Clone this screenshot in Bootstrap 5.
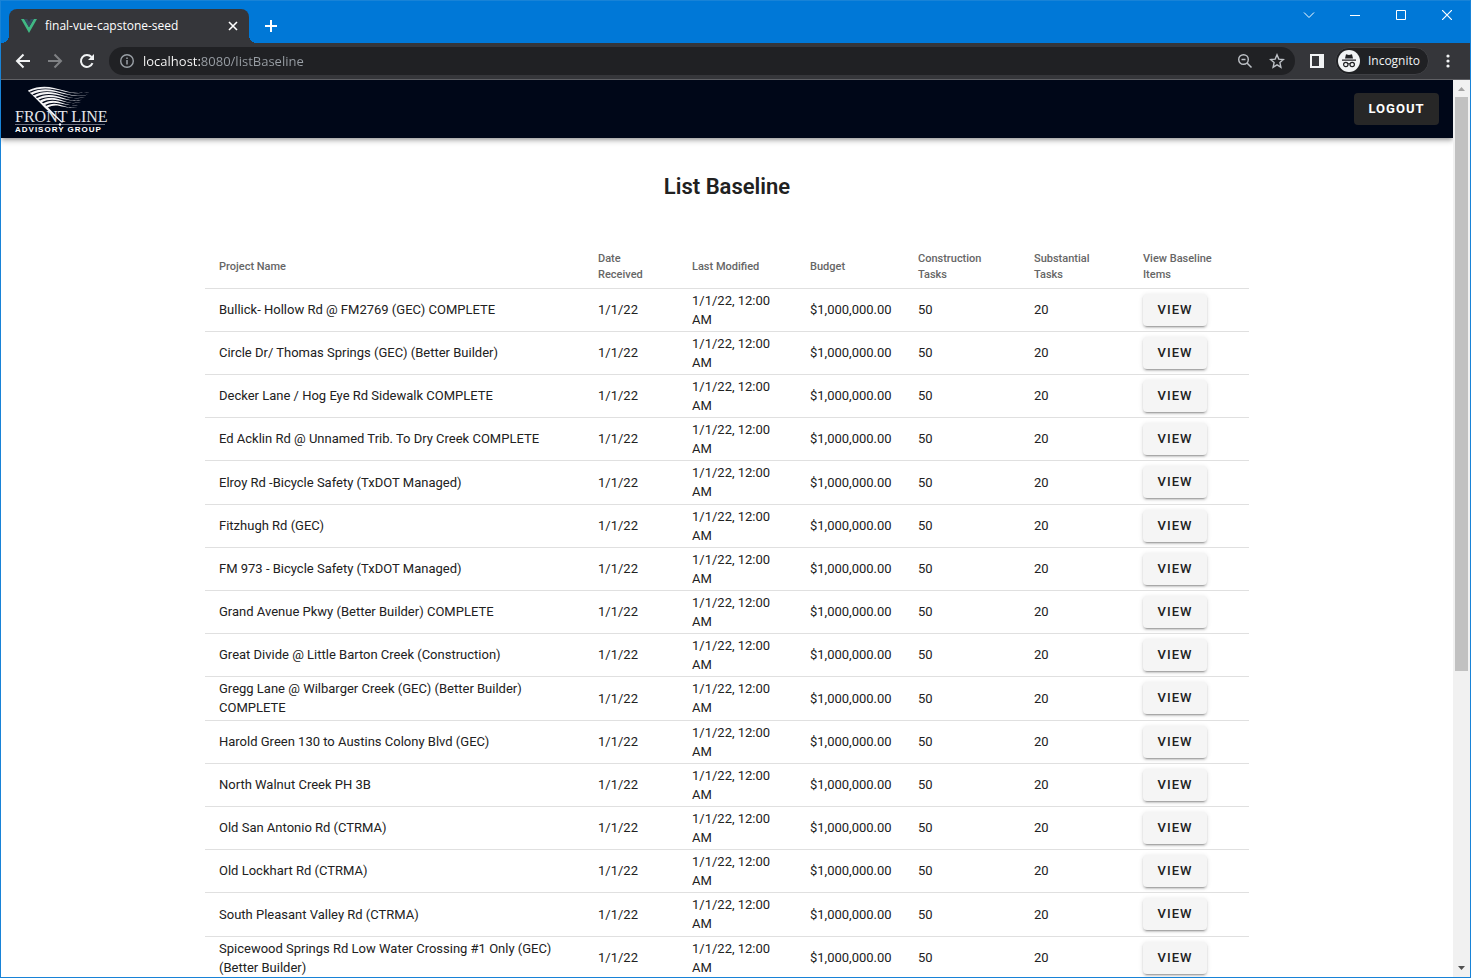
<!DOCTYPE html>
<html lang="en">
<head>
<meta charset="utf-8">
<title>final-vue-capstone-seed</title>
<meta name="viewport" content="width=device-width, initial-scale=1">
<link href="https://cdn.jsdelivr.net/npm/bootstrap@5.3.0/dist/css/bootstrap.min.css" rel="stylesheet">
<style>
  body { font-family: Roboto, sans-serif; color: #212121; height: 100vh; background: #fff; border: 1px solid #1883d7; }
  .chrome { font-family: "Open Sans", "Noto Sans", sans-serif; font-size: 12px; }
  .bare { background: none; border: 0; padding: 0; color: inherit; display: flex; align-items: center; justify-content: center; flex: none; }
  .titlebar { background: #0078d7; height: 42px; padding-left: 8px; color: #fff; }
  .tab { background: #35363a; width: 240px; height: 34px; border-radius: 8px 8px 0 0; padding: 0 8px 0 12px; position: relative; }
  .tab::before, .tab::after { content: ""; position: absolute; bottom: 0; width: 8px; height: 8px; }
  .tab::before { left: -8px; background: radial-gradient(circle at 0 0, #0078d7 8px, #35363a 8px); }
  .tab::after { right: -8px; background: radial-gradient(circle at 100% 0, #0078d7 8px, #35363a 8px); }
  .newtab { width: 28px; height: 34px; margin-left: 8px; }
  .winbtn { width: 46px; height: 28px; }
  .toolbar { background: #35363a; height: 37px; border-bottom: 1px solid #5f6064; color: #f1f3f4; padding: 0 6px; }
  .toolbtn { width: 32px; height: 32px; }
  .omnibox { background: #202124; height: 28px; border-radius: 14px; padding: 0 2px 0 10px; color: #9aa0a6; margin-left: 6px; }
  .address { border: 0; padding: 0; outline: 0; height: 28px; font-size: 13px; color: transparent; background: linear-gradient(90deg, #fff 58px, #9aa0a6 58px); -webkit-background-clip: text; background-clip: text; min-width: 0; }
  .incognito { height: 28px; background: #202124; border: 1px solid #3f4044; border-radius: 14px; padding: 0 8px 0 2px; gap: 8px; margin: 0 3px 0 4px; }
  .appbar { background: #000718; height: 58px; padding: 0 14px 0 13px; box-shadow: 0 2px 4px -1px rgba(0,0,0,.35), 0 4px 5px rgba(0,0,0,.14); position: relative; }
  .logout { background: #272727; color: #fff; font-size: 13px; font-weight: 700; letter-spacing: 1px; height: 32px; width: 85px; border: 0; border-radius: 4px; padding: 0; line-height: 32px; }
  .logout:hover { background: #333; color: #fff; }
  .page-title { font-size: 22px; font-weight: 600; line-height: 32px; margin: 33px 0 43px; }
  .sheet { width: 72%; max-width: 1044px; margin: 0 auto; }
  .baseline { table-layout: fixed; width: 100%; font-size: 13px; line-height: 19px; border-collapse: collapse; }
  .baseline th { font-size: 11px; font-weight: 500; line-height: 16px; color: #666; height: 42px; }
  .baseline th, .baseline td { padding: 0 14px; vertical-align: middle; border-bottom: 1px solid #e0e0e0; }
  .baseline tbody tr { height: 43px; }
  .baseline tbody tr:nth-child(5n) { height: 44px; }
  .c-date { width: 94px; } .c-mod { width: 118px; } .c-budget { width: 108px; }
  .c-con { width: 116px; } .c-sub { width: 109px; } .c-view { width: 120px; }
  .view { background: #f5f5f5; color: #212121; font-size: 13px; font-weight: 500; letter-spacing: 1px; width: 64px; height: 32px; border: 0; border-radius: 4px; padding: 0; line-height: 32px; display: block; box-shadow: 0 3px 1px -2px rgba(0,0,0,.2), 0 2px 2px rgba(0,0,0,.14), 0 1px 5px rgba(0,0,0,.12); }
  .scrollrail { width: 17px; background: #f1f1f1; }
  .scrollthumb { width: 13px; background: #c1c1c1; height: 64%; }
</style>
</head>
<body class="d-flex flex-column overflow-hidden">
<header class="chrome flex-shrink-0">
  <div class="titlebar d-flex align-items-end">
    <div class="tab d-flex align-items-center">
      <svg width="16" height="16" viewBox="0 0 16 16"><path d="M0 1h3.2L8 9.3 12.8 1H16L8 15z" fill="#41b883"/><path d="M3.2 1h3L8 4.1 9.8 1h3L8 9.3z" fill="#35495e"/></svg>
      <span class="flex-grow-1 ms-2">final-vue-capstone-seed</span>
      <button class="bare" aria-label="Close tab"><svg width="16" height="16" viewBox="0 0 16 16"><path d="M4 4l8 8M12 4l-8 8" stroke="#fff" stroke-width="1.6"/></svg></button>
    </div>
    <button class="bare newtab" aria-label="New tab"><svg width="14" height="14" viewBox="0 0 14 14"><path d="M7 1v12M1 7h12" stroke="#fff" stroke-width="2"/></svg></button>
    <div class="d-flex ms-auto align-self-start">
      <button class="bare winbtn" aria-label="Search tabs"><svg width="12" height="12" viewBox="0 0 12 12"><path d="M1 3.500l5 5 5-5" fill="none" stroke="#fff"/></svg></button>
      <button class="bare winbtn" aria-label="Minimize"><svg width="10" height="10" viewBox="0 0 10 10"><path d="M0 5.500h10" stroke="#fff"/></svg></button>
      <button class="bare winbtn" aria-label="Maximize"><svg width="10" height="10" viewBox="0 0 10 10"><path d="M.5.5h9v9h-9z" fill="none" stroke="#fff"/></svg></button>
      <button class="bare winbtn" aria-label="Close"><svg width="10" height="10" viewBox="0 0 10 10"><path d="M0 0l10 10M10 0L0 10" stroke="#fff" stroke-width="1.200"/></svg></button>
    </div>
  </div>
  <div class="toolbar d-flex align-items-center">
    <button class="bare toolbtn" aria-label="Back"><svg width="16" height="16" viewBox="0 0 16 16"><path d="M15 8H2M8.500 1.500L2 8l6.500 6.500" fill="none" stroke="#f1f3f4" stroke-width="2"/></svg></button>
    <button class="bare toolbtn" aria-label="Forward"><svg width="16" height="16" viewBox="0 0 16 16"><path d="M1 8h13M7.500 1.500L14 8l-6.500 6.500" fill="none" stroke="#7f8184" stroke-width="2"/></svg></button>
    <button class="bare toolbtn" aria-label="Reload"><svg width="16" height="16" viewBox="0 0 16 16"><path d="M13.500 10.200A6 6 0 1 1 12.500 4" fill="none" stroke="#f1f3f4" stroke-width="2"/><path d="M15 1v6H9z" fill="#f1f3f4"/></svg></button>
    <div class="omnibox d-flex align-items-center flex-grow-1">
      <svg class="me-2" width="16" height="16" viewBox="0 0 16 16"><circle cx="8" cy="8" r="6.300" fill="none" stroke="#9aa0a6" stroke-width="1.400"/><path d="M8 7v4.500M8 4.500v1.500" stroke="#9aa0a6" stroke-width="1.500"/></svg>
      <input class="address flex-grow-1" type="text" aria-label="Address" value="localhost:8080/listBaseline">
      <button class="bare toolbtn" aria-label="Zoom"><svg width="16" height="16" viewBox="0 0 16 16"><circle cx="6.500" cy="6.500" r="4.800" fill="none" stroke="#bdc1c6" stroke-width="1.400"/><path d="M4.500 6.500h4M10 10l4.500 4.500" stroke="#bdc1c6" stroke-width="1.500"/></svg></button>
      <button class="bare toolbtn" aria-label="Bookmark"><svg width="16" height="16" viewBox="0 0 16 16"><path d="M8 1.800l1.800 4.300 4.600.4-3.500 3.100 1 4.600L8 11.800l-3.900 2.400 1-4.600L1.600 6.500l4.600-.4z" fill="none" stroke="#bdc1c6" stroke-width="1.400"/></svg></button>
    </div>
    <button class="bare ms-2" aria-label="Side panel"><svg width="28" height="16" viewBox="0 0 28 16"><path d="M7 1h14v14H7z" fill="#f1f3f4"/><path d="M9 3h7v10H9z" fill="#35363a"/></svg></button>
    <button class="bare incognito"><svg width="22" height="22" viewBox="0 0 22 22"><circle cx="11" cy="11" r="11" fill="#f1f3f4"/><path d="M7 8.500l1-4.200 3 .7 3-.7 1 4.200zM4 9.500h14v1.200H4z" fill="#202124"/><circle cx="7.800" cy="14.500" r="2.200" fill="none" stroke="#202124" stroke-width="1.200"/><circle cx="14.200" cy="14.500" r="2.200" fill="none" stroke="#202124" stroke-width="1.200"/><path d="M10 14q1-.7 2 0" fill="none" stroke="#202124"/></svg>Incognito</button>
    <button class="bare toolbtn" aria-label="Menu"><svg width="4" height="14" viewBox="0 0 4 14" fill="#f1f3f4"><circle cx="2" cy="2" r="1.600"/><circle cx="2" cy="7" r="1.600"/><circle cx="2" cy="12" r="1.600"/></svg></button>
  </div>
</header>
<div class="d-flex flex-grow-1 overflow-hidden">
  <div class="flex-grow-1 overflow-hidden">
    <nav class="appbar d-flex align-items-center justify-content-between">
      <a href="#" aria-label="Front Line Advisory Group"><svg class="d-block overflow-visible" width="94" height="50" viewBox="0 0 94 50">
        <g fill="#f4f4f6">
          <path d="M14 6.500C28 0 38 3 50 6.500s16 2.500 26 1.500c-10 1.600-16 1.600-26-.6S29 2 15 8z"/>
          <path d="M16 9C29 2.500 39 5.500 50 9s15 2.500 24 1.800c-9 1.500-14 1.300-24-.9S30 5 18 10.500z"/>
          <path d="M19 11.700C31 5.500 40 8.500 50 11.700s13 2.300 21 1.500c-8 1.500-12 1.300-21-.7S32 8 21 13.200z"/>
          <path d="M22 14.500C33 8.500 41 11.300 50 14.300s12 2 18 1.500c-7 1.400-10 1.200-18-.5S34 11 24 16z"/>
          <path d="M25 17.200C35 11.500 42 14 50 16.900s11 2 17 1.400c-7 1.300-10 1.100-17-.5S36 14 27 18.700z"/>
          <path d="M28 20C37 14.500 43 17 50 19.500s10 1.700 16 1.200c-6 1.200-9 1-16-.4S38 17 30 21.500z"/>
          <path d="M31 22.500C39 17.800 44 20 50 22s9 1.500 14 1c-6 1.200-8 1-14-.2S40 20 33 24z"/>
          <path d="M14 6.500L33 22.500 49 38.500h-1.500L31 24z"/>
        </g>
        <text x="1" y="38" font-family="Liberation Serif, serif" font-size="16" fill="#e4e5ea">FRONT LINE</text>
        <path d="M1 40.500h90" stroke="#6c7080"/><circle cx="46" cy="40.500" r="1.200" fill="#fff"/>
        <text x="1" y="48" font-family="Liberation Sans, sans-serif" font-weight="700" font-size="8" letter-spacing="1" fill="#fff">ADVISORY GROUP</text>
      </svg></a>
      <button class="btn logout" type="button">LOGOUT</button>
    </nav>
    <main class="sheet">
      <h1 class="page-title text-center">List Baseline</h1>
      <table class="baseline">
        <colgroup><col><col class="c-date"><col class="c-mod"><col class="c-budget"><col class="c-con"><col class="c-sub"><col class="c-view"></colgroup>
        <thead><tr><th>Project Name</th><th>Date Received</th><th>Last Modified</th><th>Budget</th><th>Construction Tasks</th><th>Substantial Tasks</th><th>View Baseline Items</th></tr></thead>
        <tbody id="rows"></tbody>
      </table>
    </main>
  </div>
  <div class="scrollrail d-flex flex-column align-items-center flex-shrink-0" aria-hidden="true">
    <svg class="flex-shrink-0" width="17" height="17" viewBox="0 0 17 17"><path d="M5 11l3.500-4 3.500 4z" fill="#a3a3a3"/></svg>
    <div class="scrollthumb"></div>
    <svg class="mt-auto flex-shrink-0" width="17" height="17" viewBox="0 0 17 17"><path d="M5 6l3.500 4L12 6z" fill="#505050"/></svg>
  </div>
</div>
<script>
  const projects = [
    "Bullick- Hollow Rd @ FM2769 (GEC) COMPLETE",
    "Circle Dr/ Thomas Springs (GEC) (Better Builder)",
    "Decker Lane / Hog Eye Rd Sidewalk COMPLETE",
    "Ed Acklin Rd @ Unnamed Trib. To Dry Creek COMPLETE",
    "Elroy Rd -Bicycle Safety (TxDOT Managed)",
    "Fitzhugh Rd (GEC)",
    "FM 973 - Bicycle Safety (TxDOT Managed)",
    "Grand Avenue Pkwy (Better Builder) COMPLETE",
    "Great Divide @ Little Barton Creek (Construction)",
    "Gregg Lane @ Wilbarger Creek (GEC) (Better Builder) COMPLETE",
    "Harold Green 130 to Austins Colony Blvd (GEC)",
    "North Walnut Creek PH 3B",
    "Old San Antonio Rd (CTRMA)",
    "Old Lockhart Rd (CTRMA)",
    "South Pleasant Valley Rd (CTRMA)",
    "Spicewood Springs Rd Low Water Crossing #1 Only (GEC) (Better Builder)"
  ];
  document.getElementById("rows").innerHTML = projects.map(name =>
    `<tr><td>${name}</td><td>1/1/22</td><td>1/1/22, 12:00 AM</td><td>$1,000,000.00</td><td>50</td><td>20</td><td><button class="btn view" type="button">VIEW</button></td></tr>`
  ).join("");
</script>
<script src="https://cdn.jsdelivr.net/npm/bootstrap@5.3.0/dist/js/bootstrap.bundle.min.js"></script>
</body>
</html>
